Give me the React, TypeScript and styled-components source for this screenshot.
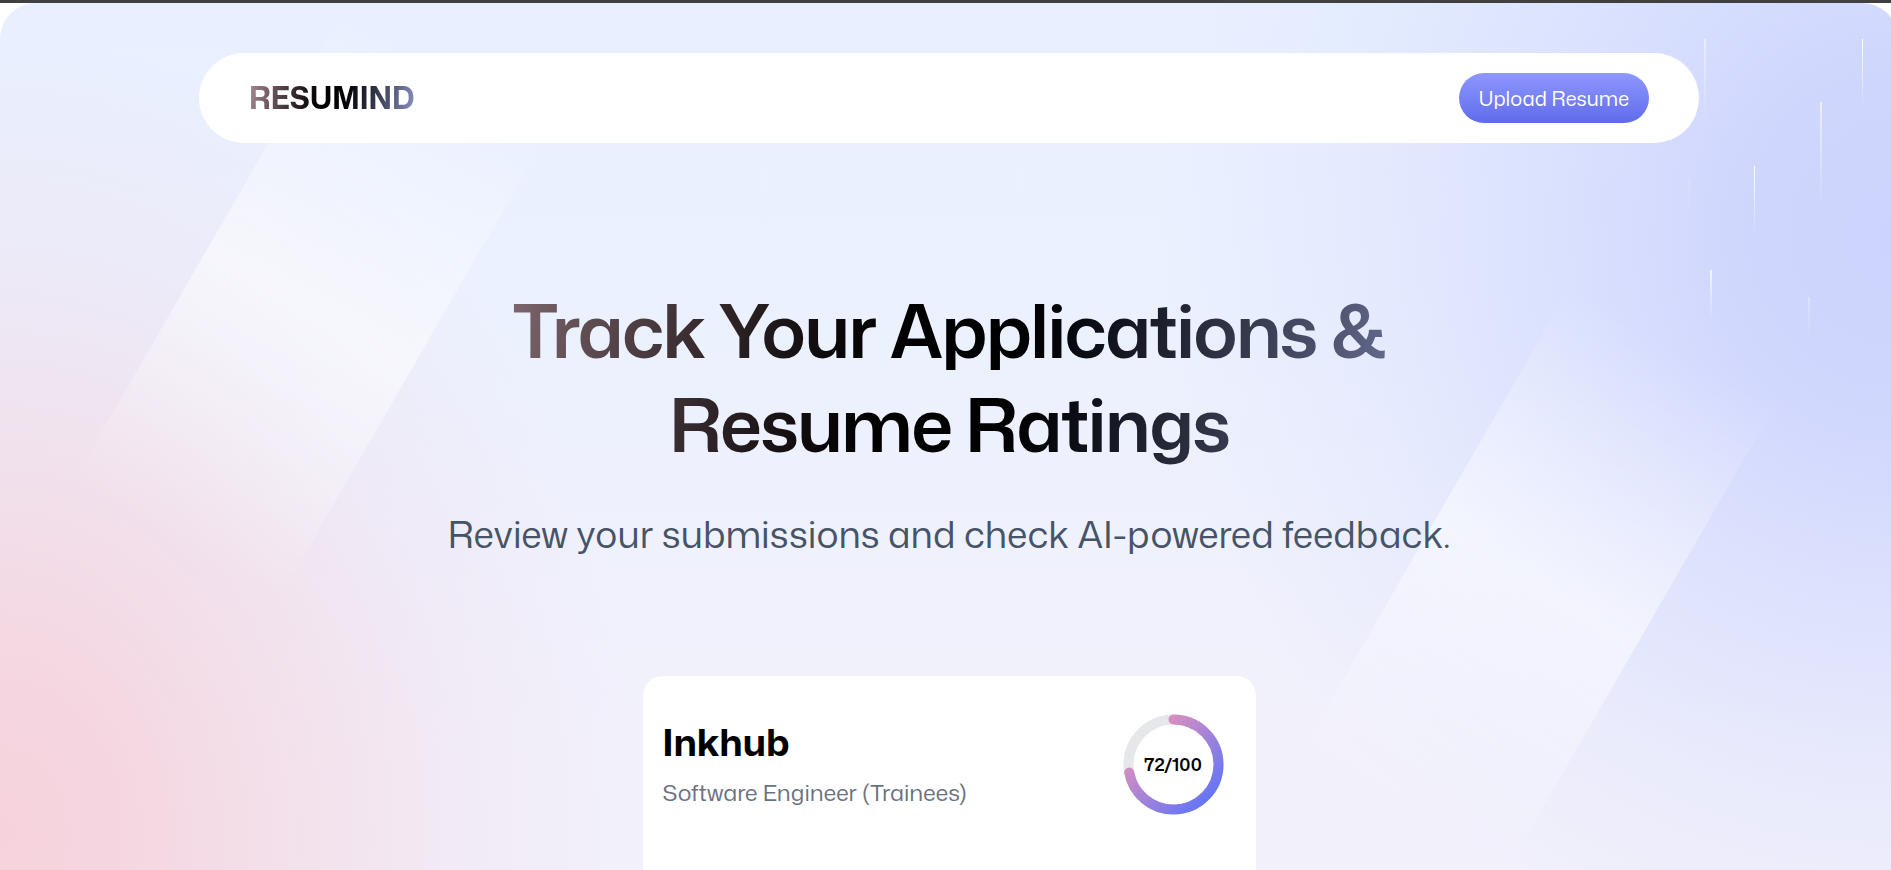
import React from "react";
import styled, { createGlobalStyle, css } from "styled-components";

const GlobalStyle = createGlobalStyle`
  * { box-sizing: border-box; }
  body {
    margin: 0;
    background: #ffffff;
    font-family: "Mona Sans", Inter, "Liberation Sans", sans-serif;
    color: #000000;
    overflow: hidden;
  }
  h1, h2, p { margin: 0; }
`;

const inkGradient = css`
  background-image: linear-gradient(100deg in oklab, #ab8c95, #000000 50%, #8e97c5);
  background-clip: text;
  -webkit-background-clip: text;
  color: transparent;
`;

const Window = styled.div`
  min-height: 100vh;
  border-top: 3px solid #404040;
  overflow: hidden;
`;

const Page = styled.div`
  position: relative;
  display: flex;
  flex-direction: column;
  align-items: center;
  min-height: calc(100vh - 3px);
  margin-right: -7px;
  padding-top: 50px;
  border-radius: 36px 36px 0 0;
  overflow: hidden;
  background:
    radial-gradient(740px 780px at 100% 27%, #ccd3fd 0%, #ccd3fde0 22%, #cfd6fd98 46%, #d3dafd40 74%, #dae1fe00 100%),
    radial-gradient(640px 820px at 0% 96%, #f6d2dc 0%, #f5d3dde0 20%, #f3d4df90 45%, #f0d6e43c 72%, #efe0f000 100%),
    linear-gradient(#e8f0ff 0%, #ecf1fe 40%, #f2f1fb 85%);
`;

const Beam = styled.div<{ $top: number; $side: "left" | "right"; $offset: number }>`
  position: absolute;
  top: ${(p) => p.$top}px;
  ${(p) => p.$side}: ${(p) => p.$offset}px;
  width: 237px;
  height: 545px;
  transform: rotate(30deg);
  background: linear-gradient(#ffffff00, #ffffff88 50%, #ffffff00);
`;

const Streak = styled.div<{ $top: number; $right: number; $length: number; $width: number; $alpha: number }>`
  position: absolute;
  top: ${(p) => p.$top}px;
  right: ${(p) => p.$right}px;
  width: ${(p) => p.$width}px;
  height: ${(p) => p.$length}px;
  opacity: ${(p) => p.$alpha};
  background: linear-gradient(#ffffff, #ffffff00);
`;

const Navbar = styled.nav`
  position: relative;
  display: flex;
  align-items: center;
  justify-content: space-between;
  width: 100%;
  max-width: 1500px;
  padding: 20px 50px;
  border-radius: 45px;
  background: #ffffff;
`;

const Logo = styled.a`
  ${inkGradient}
  font-size: 30px;
  line-height: 40px;
  font-weight: 700;
  text-decoration: none;
`;

const UploadButton = styled.button`
  padding: 10px 20px;
  border: 0;
  border-radius: 25px;
  background: linear-gradient(#8e98ff, #606beb);
  color: #ffffff;
  font-family: inherit;
  font-size: 20px;
  line-height: 30px;
  cursor: pointer;
`;

const Hero = styled.header`
  position: relative;
  display: flex;
  flex-direction: column;
  align-items: center;
  gap: 37px;
  width: 100%;
  max-width: 1100px;
  margin-top: 140px;
  text-align: center;
`;

const Title = styled.h1`
  ${inkGradient}
  width: 100%;
  font-size: 74px;
  line-height: 94px;
  font-weight: 600;
  letter-spacing: -2px;
`;

const Subtitle = styled.p`
  color: #475467;
  font-size: 37px;
  line-height: 52px;
`;

const Card = styled.article`
  position: relative;
  width: 100%;
  max-width: 613px;
  min-height: 700px;
  margin: 116px 0 -506px;
  padding: 20px;
  border-radius: 20px;
  background: #ffffff;
`;

const CardHeader = styled.div`
  display: flex;
  align-items: center;
  justify-content: space-between;
  height: 136px;
`;

const CardText = styled.div`
  display: flex;
  flex-direction: column;
  gap: 10px;
`;

const Company = styled.h2`
  font-size: 37px;
  line-height: 46px;
  font-weight: 700;
`;

const Role = styled.p`
  color: #6a7282;
  font-size: 23px;
  line-height: 34px;
`;

const Score = styled.div`
  position: relative;
  display: grid;
  place-items: center;
  width: 125px;
  height: 125px;

  svg {
    position: absolute;
    inset: 0;
    transform: rotate(-90deg);
  }

  span {
    position: relative;
    font-size: 18px;
    line-height: 24px;
    font-weight: 600;
  }
`;

const streaks = [
  { $top: 36, $right: 192, $length: 84, $width: 2, $alpha: 0.45 },
  { $top: 36, $right: 35, $length: 70, $width: 1, $alpha: 1 },
  { $top: 99, $right: 76, $length: 104, $width: 2, $alpha: 0.6 },
  { $top: 163, $right: 143, $length: 70, $width: 1, $alpha: 1 },
  { $top: 175, $right: 208, $length: 38, $width: 2, $alpha: 0.15 },
  { $top: 267, $right: 186, $length: 50, $width: 2, $alpha: 0.7 },
  { $top: 294, $right: 88, $length: 40, $width: 2, $alpha: 0.3 },
];

function ScoreCircle({ score }: { score: number }) {
  const radius = 36;
  const circumference = 2 * Math.PI * radius;
  return (
    <Score>
      <svg width="125" height="125" viewBox="0 0 100 100" fill="none" aria-hidden="true">
        <defs>
          <linearGradient id="score" x1="1" y1="0" x2="0" y2="1">
            <stop offset="0%" stopColor="#ff97ad" />
            <stop offset="100%" stopColor="#5171ff" />
          </linearGradient>
        </defs>
        <circle cx="50" cy="50" r={radius} stroke="#e5e7eb" strokeWidth="8" />
        <circle
          cx="50"
          cy="50"
          r={radius}
          stroke="url(#score)"
          strokeWidth="8"
          strokeLinecap="round"
          strokeDasharray={circumference}
          strokeDashoffset={circumference * (1 - score / 100)}
        />
      </svg>
      <span>{score}/100</span>
    </Score>
  );
}

export default function App() {
  return (
    <>
      <GlobalStyle />
      <Window>
        <Page>
          <Beam $top={30} $side="left" $offset={193} />
          <Beam $top={306} $side="right" $offset={243} />
          {streaks.map((streak) => (
            <Streak key={`${streak.$top}-${streak.$right}`} {...streak} />
          ))}
          <Navbar>
            <Logo href="#">RESUMIND</Logo>
            <UploadButton type="button">Upload Resume</UploadButton>
          </Navbar>
          <Hero>
            <Title>
              Track Your Applications &amp;
              <br />
              Resume Ratings
            </Title>
            <Subtitle>Review your submissions and check AI-powered feedback.</Subtitle>
          </Hero>
          <Card>
            <CardHeader>
              <CardText>
                <Company>Inkhub</Company>
                <Role>Software Engineer (Trainees)</Role>
              </CardText>
              <ScoreCircle score={72} />
            </CardHeader>
          </Card>
        </Page>
      </Window>
    </>
  );
}
